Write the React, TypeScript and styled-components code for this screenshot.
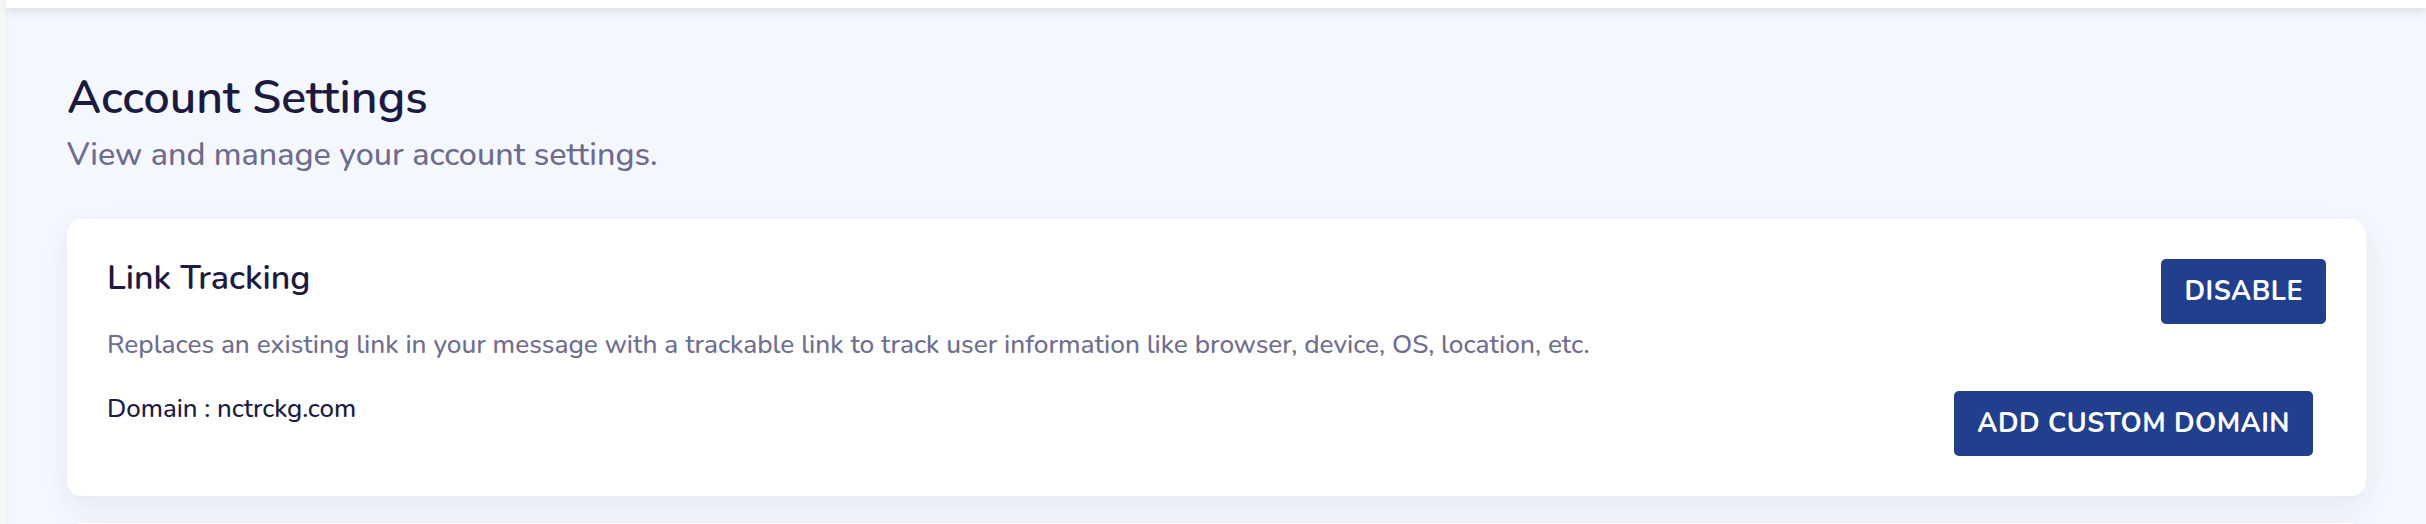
import React from 'react';
import styled, { createGlobalStyle } from 'styled-components';

const GlobalStyle = createGlobalStyle`
  * {
    box-sizing: border-box;
  }

  html, body {
    margin: 0;
    padding: 0;
    background-color: #f4f7fe;
    font-family: "Nunito", "Lato", "Noto Sans", sans-serif;
  }
`;

const Layout = styled.div`
  display: flex;
  min-height: 100vh;
`;

const SideEdge = styled.div`
  width: 6px;
  flex-shrink: 0;
  background-color: #f7f7f9;
  box-shadow: 1px 0 4px rgba(0, 0, 0, 0.04);
  position: relative;
  z-index: 1;
`;

const Body = styled.div`
  flex: 1;
  display: flex;
  flex-direction: column;
`;

const TopBar = styled.header`
  height: 8px;
  background-color: #ffffff;
  box-shadow: 0 3px 10px rgba(0, 0, 0, 0.12);
  position: relative;
  z-index: 2;
`;

const Main = styled.main`
  padding: 62px 60px 40px 61px;
`;

const PageTitle = styled.h1`
  margin: 0;
  font-size: 46.5px;
  line-height: 56px;
  font-weight: 600;
  color: #1c1b3f;
`;

const PageSubtitle = styled.p`
  margin: 8px 0 0;
  font-size: 32.3px;
  line-height: 40px;
  font-weight: 500;
  color: #6d6c8c;
`;

const CardList = styled.div`
  display: flex;
  flex-direction: column;
  gap: 27px;
  margin-top: 45px;
`;

const Card = styled.section<{ empty?: boolean }>`
  display: flex;
  justify-content: space-between;
  align-items: flex-start;
  padding: 40px;
  min-height: ${({ empty }) => (empty ? '200px' : 'auto')};
  background-color: #ffffff;
  border-radius: 15px;
  box-shadow: 0 10px 28px rgba(30, 40, 80, 0.07);
`;

const CardInfo = styled.div`
  display: flex;
  flex-direction: column;
`;

const CardTitle = styled.h2`
  margin: 0;
  font-size: 34px;
  line-height: 38px;
  font-weight: 600;
  color: #1c1b3f;
`;

const CardText = styled.p<{ muted?: boolean }>`
  margin: 32px 0 0;
  font-size: ${({ muted }) => (muted ? '26.2px' : '25.8px')};
  line-height: 32px;
  font-weight: 500;
  color: ${({ muted }) => (muted ? '#6f6e8e' : '#1c1b3f')};
`;

const CardActions = styled.div`
  display: flex;
  flex-direction: column;
  align-items: flex-end;
  gap: 67px;
`;

const ActionButton = styled.button<{ inset?: boolean }>`
  display: inline-flex;
  align-items: center;
  justify-content: center;
  height: 65px;
  padding: 0 23px;
  margin-right: ${({ inset }) => (inset ? '13px' : '0')};
  background-color: #213f8d;
  color: #ffffff;
  border: none;
  border-radius: 5px;
  font-family: inherit;
  font-size: 27px;
  font-weight: 700;
  letter-spacing: 0.5px;
  cursor: pointer;

  &:hover {
    background-color: #1a3475;
  }
`;

const App: React.FC = () => {
  return (
    <>
      <GlobalStyle />
      <Layout>
        <SideEdge />
        <Body>
          <TopBar />
          <Main>
            <PageTitle>Account Settings</PageTitle>
            <PageSubtitle>View and manage your account settings.</PageSubtitle>
            <CardList>
              <Card>
                <CardInfo>
                  <CardTitle>Link Tracking</CardTitle>
                  <CardText muted>
                    Replaces an existing link in your message with a trackable link to track user
                    information like browser, device, OS, location, etc.
                  </CardText>
                  <CardText>Domain : nctrckg.com</CardText>
                </CardInfo>
                <CardActions>
                  <ActionButton type="button">DISABLE</ActionButton>
                  <ActionButton type="button" inset>
                    ADD CUSTOM DOMAIN
                  </ActionButton>
                </CardActions>
              </Card>
              <Card empty />
            </CardList>
          </Main>
        </Body>
      </Layout>
    </>
  );
};

export default App;
